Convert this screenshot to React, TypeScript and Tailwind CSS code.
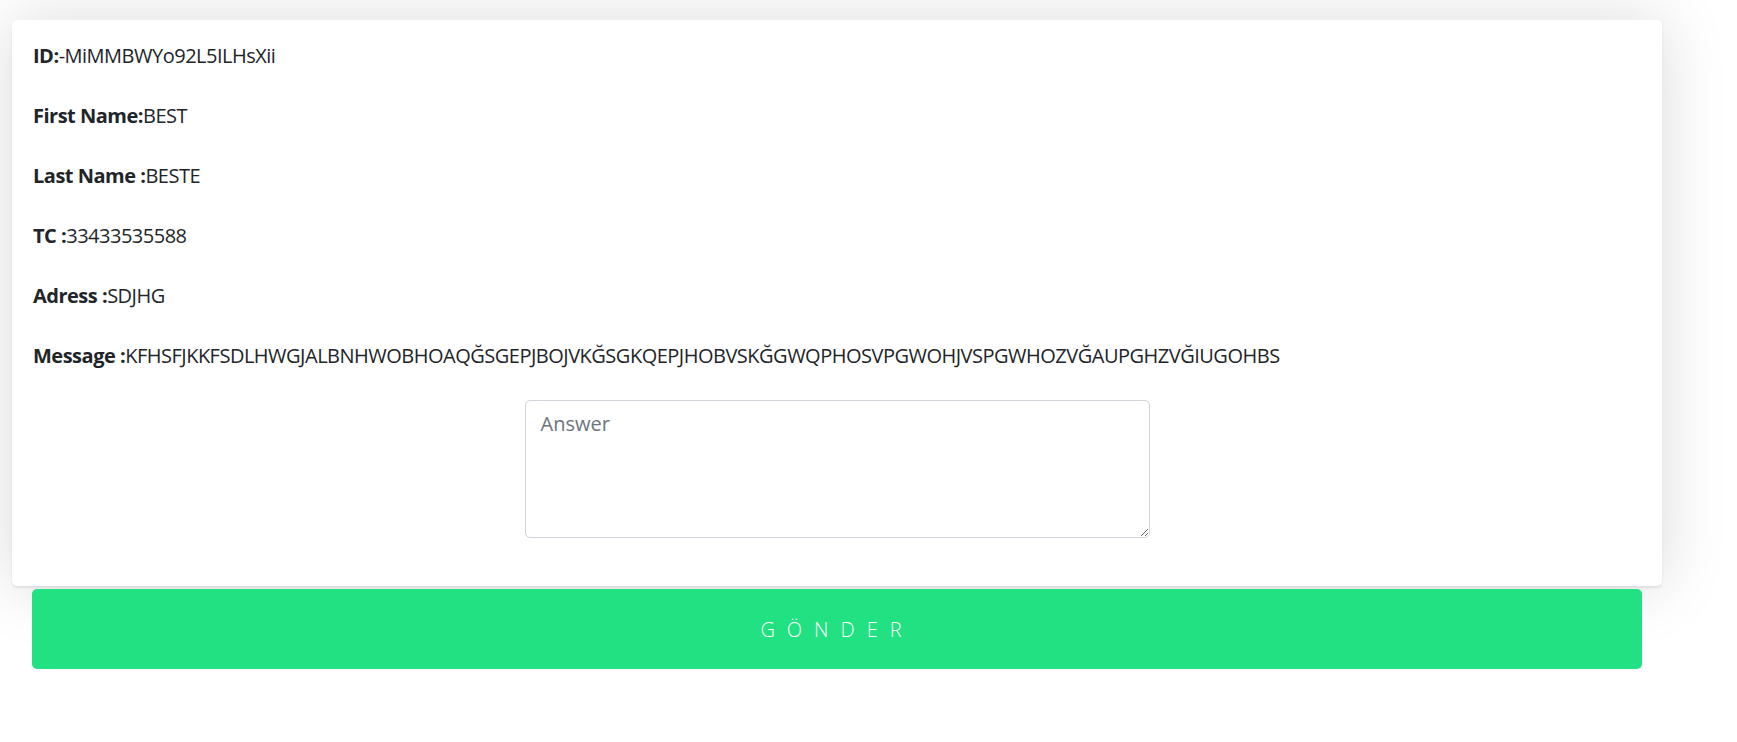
import React from "react";

const rows: { label: string; value: string }[] = [
  { label: "ID:", value: "-MiMMBWYo92L5ILHsXii" },
  { label: "First Name:", value: "BEST" },
  { label: "Last Name :", value: "BESTE" },
  { label: "TC :", value: "33433535588" },
  { label: "Adress :", value: "SDJHG" },
  {
    label: "Message :",
    value:
      "KFHSFJKKFSDLHWGJALBNHWOBHOAQĞSGEPJBOJVKĞSGKQEPJHOBVSKĞGWQPHOSVPGWOHJVSPGWHOZVĞAUPGHZVĞIUGOHBS",
  },
];

export default function App() {
  return (
    <div
      className="min-h-[742px] w-full bg-white text-[#212529]"
      style={{ fontFamily: '"Open Sans", "Noto Sans", sans-serif' }}
    >
      <div className="pl-[12px] pt-[20px]">
        <div className="w-[1650px] rounded-[5px] bg-white px-[21px] pt-[21px] pb-[48px] shadow-[0_0_65px_rgba(0,0,0,0.15),0_2px_2px_rgba(0,0,0,0.08)]">
          {rows.map((r) => (
            <p key={r.label} className="mb-[30px] text-[20px] leading-[30px] tracking-[-0.5px] last-of-type:mb-[29px]">
              <b className="font-bold">{r.label}</b>
              {r.value}
            </p>
          ))}
          <div className="flex justify-center">
            <textarea
              placeholder="Answer"
              className="block h-[138px] w-[625px] rounded-[5px] border border-[#ced4da] bg-white px-[15px] py-[7.5px] text-[20px] leading-[30px] text-[#212529] outline-none placeholder:text-[#6c757d]"
            />
          </div>
        </div>
        <div className="mt-[3px] ml-[20px] w-[1610px]">
          <button className="flex h-[80px] w-full items-center justify-center rounded-[5px] bg-[#21e182] pt-[2px] text-[20px] font-light tracking-[12px] text-white">
            GÖNDER
          </button>
        </div>
      </div>
    </div>
  );
}
